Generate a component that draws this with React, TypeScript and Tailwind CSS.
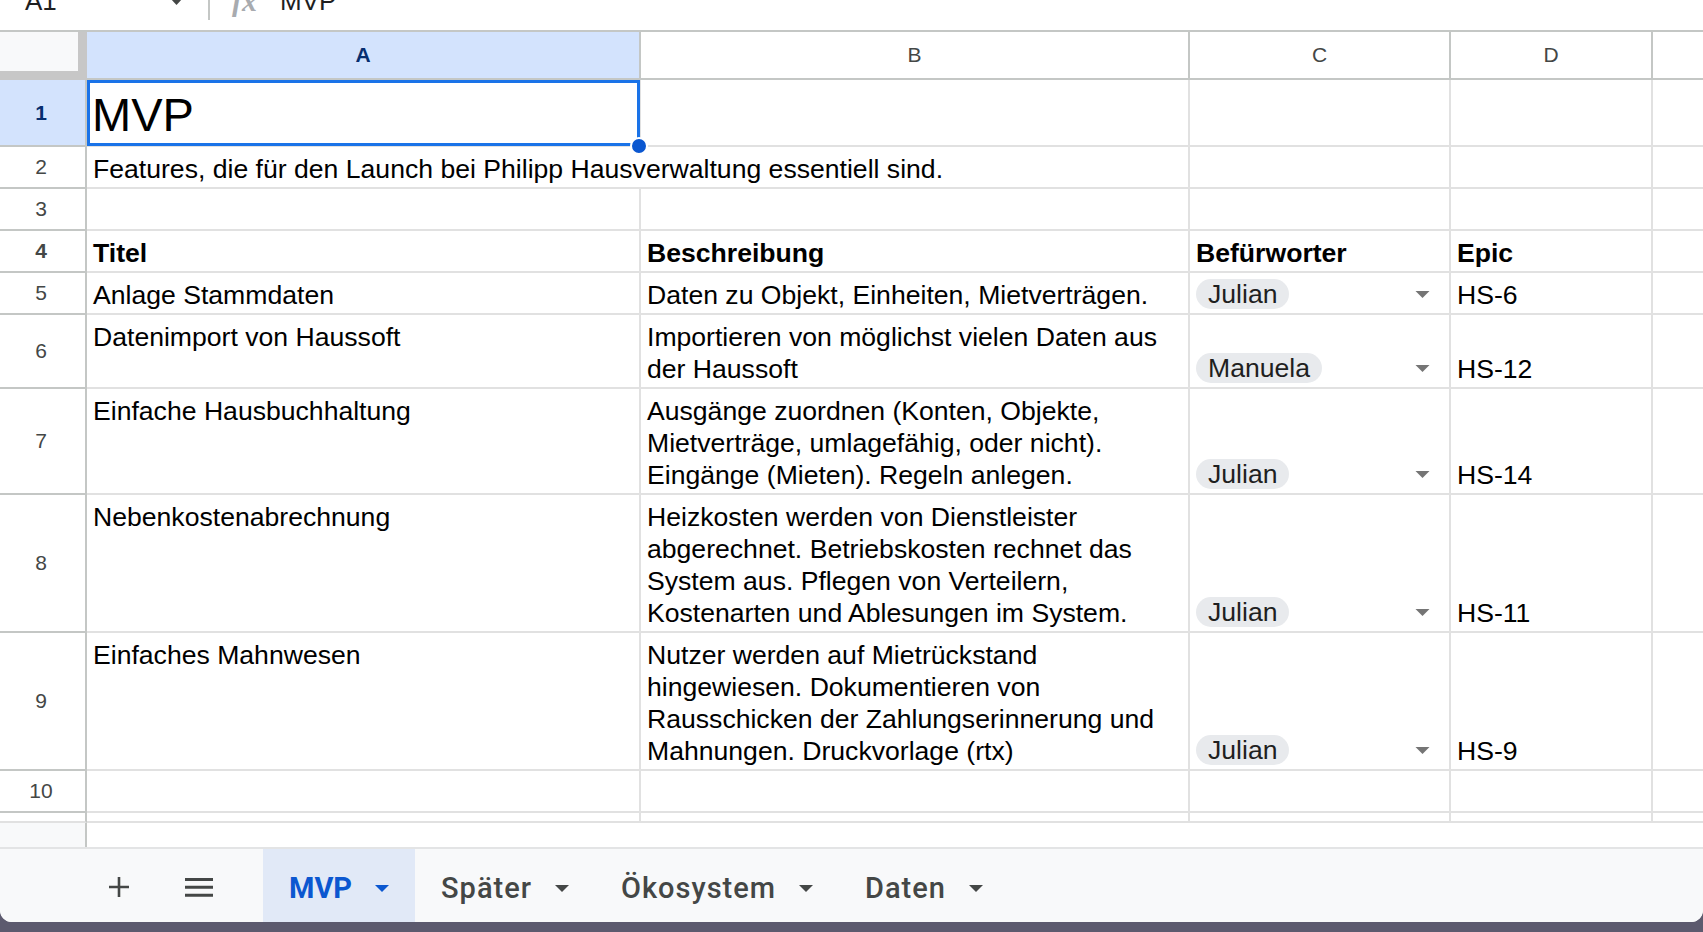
import clsx from "clsx";

type DataRow = {
	n: number;
	h: string;
	title: string;
	desc: string[];
	who: string;
	epic: string;
};

const dataRows: DataRow[] = [
	{ n: 5, h: "h-[42px]", title: "Anlage Stammdaten", desc: ["Daten zu Objekt, Einheiten, Mietverträgen."], who: "Julian", epic: "HS-6" },
	{ n: 6, h: "h-[74px]", title: "Datenimport von Haussoft", desc: ["Importieren von möglichst vielen Daten aus", "der Haussoft"], who: "Manuela", epic: "HS-12" },
	{
		n: 7,
		h: "h-[106px]",
		title: "Einfache Hausbuchhaltung",
		desc: ["Ausgänge zuordnen (Konten, Objekte,", "Mietverträge, umlagefähig, oder nicht).", "Eingänge (Mieten). Regeln anlegen."],
		who: "Julian",
		epic: "HS-14",
	},
	{
		n: 8,
		h: "h-[138px]",
		title: "Nebenkostenabrechnung",
		desc: ["Heizkosten werden von Dienstleister", "abgerechnet. Betriebskosten rechnet das", "System aus. Pflegen von Verteilern,", "Kostenarten und Ablesungen im System."],
		who: "Julian",
		epic: "HS-11",
	},
	{
		n: 9,
		h: "h-[138px]",
		title: "Einfaches Mahnwesen",
		desc: ["Nutzer werden auf Mietrückstand", "hingewiesen. Dokumentieren von", "Rausschicken der Zahlungserinnerung und", "Mahnungen. Druckvorlage (rtx)"],
		who: "Julian",
		epic: "HS-9",
	},
];

const tabs = ["MVP", "Später", "Ökosystem", "Daten"];

function Caret({ className }: { className?: string }) {
	return (
		<svg viewBox="0 0 14 7" className={className}>
			<path d="M0 0h14L7 7z" fill="currentColor" />
		</svg>
	);
}

function RowHeader({ n, selected }: { n: number | string; selected?: boolean }) {
	return (
		<div
			className={clsx(
				"flex w-[87px] shrink-0 items-center justify-center border-r-2 border-b-2 border-[#c4c7c5] pr-[3px] text-[21px]",
				selected ? "bg-[#d3e3fd] font-bold text-[#062e6f]" : "bg-white text-[#444746]"
			)}
		>
			{n}
		</div>
	);
}

const cellA = "w-[554px] shrink-0 border-r-2 border-b-2 border-[#e1e1e1] pl-[6px] pt-[6px] leading-[32px] whitespace-nowrap";
const cellB = "w-[549px] shrink-0 border-r-2 border-b-2 border-[#e1e1e1] pl-[6px] pt-[6px] leading-[32px] whitespace-nowrap";
const cellC = "flex w-[261px] shrink-0 items-end border-r-2 border-b-2 border-[#e1e1e1] pl-[6px] pb-[4px]";
const cellD = "flex w-[202px] shrink-0 items-end border-r-2 border-b-2 border-[#e1e1e1] pl-[6px] pb-[2px] leading-[32px]";
const cellE = "flex-1 border-b-2 border-[#e1e1e1]";

function Chip({ name }: { name: string }) {
	return (
		<div className="flex w-full items-center justify-between pr-[19px]">
			<span className="inline-flex h-[30px] items-center rounded-full bg-[#e8eaed] px-[12px] leading-[30px] text-[#1f1f1f]">{name}</span>
			<Caret className="h-[7px] w-[15px] text-[#757575]" />
		</div>
	);
}

export default function App() {
	return (
		<div className="h-screen w-full overflow-hidden bg-[#5c5a6e] font-['Liberation_Sans',Arial,sans-serif] text-[26.6px] text-black">
			<div className="flex h-[922px] flex-col overflow-hidden rounded-b-[12px] bg-white">
				{/* Formula bar (cut off at top) */}
				<div className="h-[32px] shrink-0 overflow-hidden border-b-2 border-[#c4c7c5] bg-white">
					<div className="-mt-[14px] flex items-start text-[26px] leading-[30px] text-[#1f1f1f]">
						<span className="ml-[25px] w-[145px]">A1</span>
						<svg viewBox="0 0 13 30" className="h-[30px] w-[13px] text-[#444746]">
							<path d="M0 12h13l-6.5 7z" fill="currentColor" />
						</svg>
						<div className="ml-[25px] h-[34px] w-[2px] bg-[#c4c7c5]" />
						<span className="ml-[22px] w-[48px] font-['Liberation_Serif',serif] text-[30px] font-bold italic text-[#a8abaf]">fx</span>
						<span>MVP</span>
					</div>
				</div>

				{/* Column headers */}
				<div className="flex h-[48px] shrink-0 text-[21px] text-[#444746]">
					<div className="w-[87px] shrink-0 border-r-[9px] border-b-[9px] border-[#c7c7c7] bg-[#f8f9fa]" />
					<div className="flex w-[554px] shrink-0 items-center justify-center border-r-2 border-b-2 border-[#c4c7c5] bg-[#d3e3fd] font-bold text-[#062e6f]">
						A
					</div>
					<div className="flex w-[549px] shrink-0 items-center justify-center border-r-2 border-b-2 border-[#c4c7c5]">B</div>
					<div className="flex w-[261px] shrink-0 items-center justify-center border-r-2 border-b-2 border-[#c4c7c5]">C</div>
					<div className="flex w-[202px] shrink-0 items-center justify-center border-r-2 border-b-2 border-[#c4c7c5]">D</div>
					<div className="flex-1 border-b-2 border-[#c4c7c5]" />
				</div>

				{/* Row 1 */}
				<div className="flex h-[67px] shrink-0">
					<RowHeader n={1} selected />
					<div className="relative flex w-[554px] shrink-0 items-end border-r-2 border-b-2 border-[#e1e1e1] pl-[5px] pb-[3px] text-[47px] leading-[54px]">
						MVP
						<div className="absolute top-0 left-0 -right-[1px] -bottom-[1px] z-10 border-[3px] border-[#1a73e8]" />
						<div className="absolute -right-[9px] -bottom-[10px] z-20 h-[18px] w-[18px] rounded-full border-2 border-white bg-[#0b57d0]" />
					</div>
					<div className={cellB} />
					<div className={cellC} />
					<div className={cellD} />
					<div className={cellE} />
				</div>

				{/* Row 2 */}
				<div className="flex h-[42px] shrink-0">
					<RowHeader n={2} />
					<div className="w-[1103px] shrink-0 border-r-2 border-b-2 border-[#e1e1e1] pl-[6px] pt-[6px] leading-[32px] whitespace-nowrap">
						Features, die für den Launch bei Philipp Hausverwaltung essentiell sind.
					</div>
					<div className={cellC} />
					<div className={cellD} />
					<div className={cellE} />
				</div>

				{/* Row 3 */}
				<div className="flex h-[42px] shrink-0">
					<RowHeader n={3} />
					<div className={cellA} />
					<div className={cellB} />
					<div className={cellC} />
					<div className={cellD} />
					<div className={cellE} />
				</div>

				{/* Row 4 */}
				<div className="flex h-[42px] shrink-0 font-bold">
					<RowHeader n={4} />
					<div className={cellA}>Titel</div>
					<div className={cellB}>Beschreibung</div>
					<div className={clsx(cellC, "leading-[32px]")}>
						<span className="-mb-[2px]">Befürworter</span>
					</div>
					<div className={cellD}>Epic</div>
					<div className={cellE} />
				</div>

				{dataRows.map((r) => (
					<div key={r.n} className={clsx("flex shrink-0", r.h)}>
						<RowHeader n={r.n} />
						<div className={cellA}>{r.title}</div>
						<div className={cellB}>
							{r.desc.map((line) => (
								<div key={line}>{line}</div>
							))}
						</div>
						<div className={cellC}>
							<Chip name={r.who} />
						</div>
						<div className={cellD}>{r.epic}</div>
						<div className={cellE} />
					</div>
				))}

				{/* Row 10 */}
				<div className="flex h-[42px] shrink-0">
					<RowHeader n={10} />
					<div className={cellA} />
					<div className={cellB} />
					<div className={cellC} />
					<div className={cellD} />
					<div className={cellE} />
				</div>

				{/* Row 11, partly visible */}
				<div className="flex h-[10px] shrink-0">
					<div className="w-[87px] shrink-0 border-r-2 border-b-2 border-r-[#c4c7c5] border-b-[#e1e1e1]" />
					<div className="w-[554px] shrink-0 border-r-2 border-b-2 border-[#e1e1e1]" />
					<div className="w-[549px] shrink-0 border-r-2 border-b-2 border-[#e1e1e1]" />
					<div className="w-[261px] shrink-0 border-r-2 border-b-2 border-[#e1e1e1]" />
					<div className="w-[202px] shrink-0 border-r-2 border-b-2 border-[#e1e1e1]" />
					<div className={cellE} />
				</div>

				{/* Scroll area */}
				<div className="flex h-[24px] shrink-0">
					<div className="w-[87px] shrink-0 border-r-2 border-[#c4c7c5] bg-[#f8f9fa]" />
					<div className="flex-1 bg-white" />
				</div>
				<div className="h-[2px] shrink-0 bg-[#e3e4e5]" />

				{/* Sheet tabs */}
				<div className="flex h-[73px] shrink-0 items-stretch bg-[#f8f9fa] font-['Roboto',sans-serif] text-[#444746]">
					<div className="flex items-center pt-[3px] pl-[109px]">
						<svg viewBox="0 0 20 20" className="h-[20px] w-[20px]">
							<path d="M10 0v20M0 10h20" stroke="currentColor" strokeWidth="2.6" />
						</svg>
					</div>
					<div className="flex items-center pt-[3px] pl-[56px]">
						<svg viewBox="0 0 28 19" className="h-[19px] w-[28px]">
							<path d="M0 1.5h28M0 9.2h28M0 17.2h28" stroke="currentColor" strokeWidth="3" />
						</svg>
					</div>
					<div className="w-[50px]" />
					{tabs.map((t, i) => (
						<div
							key={t}
							className={clsx(
								"flex items-center gap-[23px] px-[26px] pt-[6px] text-[29px] font-medium tracking-[1px]",
								i === 0 ? "bg-[#e1e9f7] text-[#0b57d0]" : ""
							)}
						>
							<span className={i === 0 ? "font-bold tracking-[0px]" : ""}>{t}</span>
							<Caret className="h-[7px] w-[14px]" />
						</div>
					))}
				</div>
			</div>
		</div>
	);
}
